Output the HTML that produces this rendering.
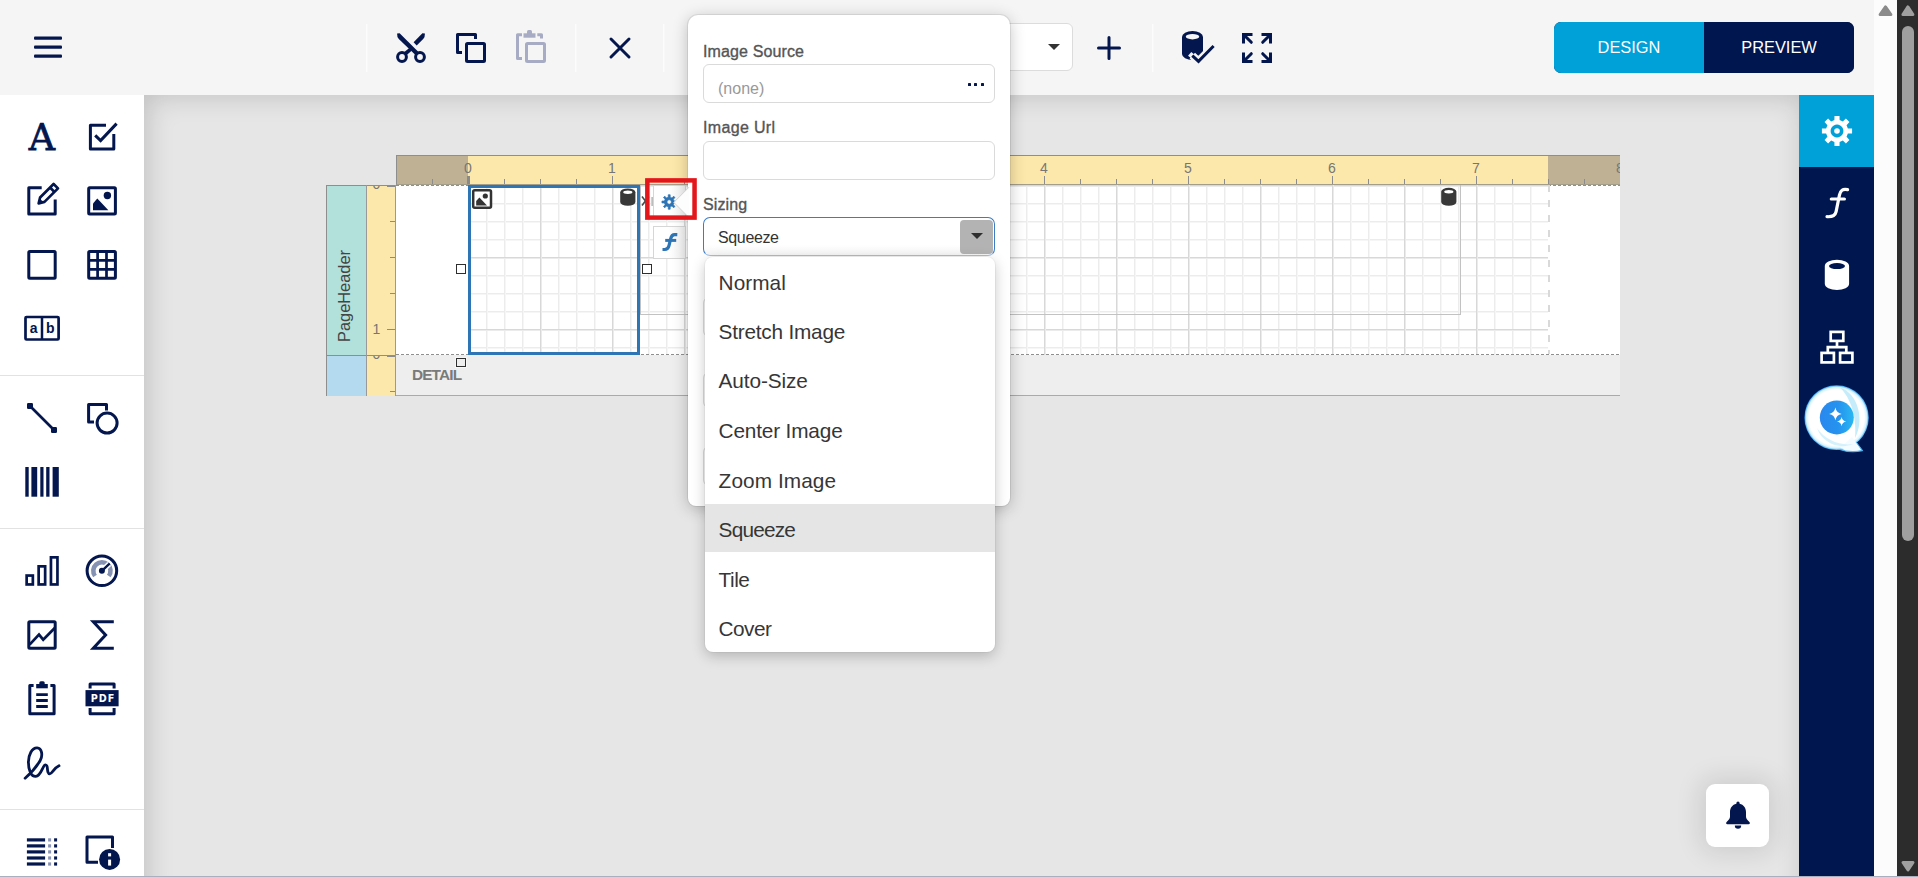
<!DOCTYPE html>
<html lang="en">
<head>
<meta charset="utf-8">
<title>Report Designer</title>
<style>
*{box-sizing:border-box;margin:0;padding:0}
html,body{width:1918px;height:877px;overflow:hidden;background:#e6e6e6;font-family:"Liberation Sans","DejaVu Sans",sans-serif;color:#333}
#app{position:absolute;left:0;top:0;width:1918px;height:877px;overflow:hidden}
#app div,#app span,#app i{position:absolute}
svg{position:absolute;left:0;top:0;overflow:visible}
/* top toolbar */
#topbar{left:0;top:0;width:1874px;height:95px;background:#f5f5f5}
.sep{top:24px;width:1px;height:48px;background:#fcfcfc;box-shadow:1px 0 0 rgba(255,255,255,.35)}
#ddbox{left:700px;top:23px;width:373px;height:48px;background:#fff;border:1px solid #dcdcdc;border-radius:6px}
#ddbox i{left:347px;top:20px;width:0;height:0;border-left:6px solid transparent;border-right:6px solid transparent;border-top:6px solid #333}
#btns{left:1554px;top:22px;width:300px;height:51px;border-radius:7px;overflow:hidden;background:#00164f}
#btns div{top:0;height:51px;width:150px;color:#fff;font-size:16.4px;line-height:50px;text-align:center}
#btns .d{left:0;background:#00a0d8}
#btns .p{left:150px;background:#00164f}
/* left toolbox */
#toolbox{left:0;top:95px;width:144px;height:782px;background:#fff}
.hr{left:0;width:144px;height:1px;background:#e2e2e2}
/* main */
#main{left:144px;top:95px;width:1655px;height:900px;background:#e6e6e6;box-shadow:inset 4px 2px 27px rgba(0,0,0,.16)}
/* right bar */
#rightbar{left:1799px;top:95px;width:75px;height:782px;background:#00164f}
#rightbar .active{left:0;top:0;width:75px;height:72px;background:#00a0d8}
/* scrollbars */
#sb1{left:1874px;top:0;width:23px;height:877px;background:#fcfcfc}
#sb2{left:1897px;top:0;width:21px;height:877px;background:#2c2c2c}
#sb2 .thumb{left:5px;top:26px;width:12px;height:515px;border-radius:6px;background:#9f9f9f}
#bottomline{left:0;top:876px;width:1918px;height:1px;background:#a9afbe}
/* design surface */
#hruler{left:396px;top:155px;width:1224px;height:30px;border-top:1px solid #8e8e8e;border-left:1px solid #8e8e8e;border-bottom:1px solid #a39d8c;
 background:linear-gradient(90deg,#bfb294 0,#bfb294 71px,#fde8ab 71px,#fde8ab 1151px,#bfb294 1151px);overflow:hidden}
#hruler .t1{left:-1px;top:23px;width:1224px;height:6px;background:repeating-linear-gradient(90deg,#8c8c8c 0,#8c8c8c 1px,transparent 1px,transparent 36px)}
#hruler .t2{left:71px;top:20px;width:1224px;height:9px;background:repeating-linear-gradient(90deg,#8c8c8c 0,#8c8c8c 1px,transparent 1px,transparent 144px)}
#hruler span{top:5px;width:40px;margin-left:-21px;text-align:center;font-size:14px;line-height:14px;color:#767676}
#seclab{left:326px;top:185px;width:40px;height:211px;border-left:1px solid #8e8e8e;border-top:1px solid #8e8e8e;background:#b2e0db;overflow:hidden}
#seclab .d{left:0;top:169px;width:40px;height:41px;background:#b3daee;border-top:1px solid #8e8e8e}
#seclab .t{left:-2px;top:156px;width:170px;height:40px;transform-origin:0 0;transform:rotate(-90deg);font-size:16.4px;line-height:38px;color:#444;padding-left:0;white-space:nowrap}
#vruler{left:366px;top:185px;width:30px;height:211px;background:#fde8ab;border-left:1px solid #999;border-right:1px solid #999;overflow:hidden}
#vruler .sec{left:0;width:28px;overflow:hidden;border-top:1px solid #8e8e8e}
#vruler b{position:absolute;right:0;height:1px;background:#8c8c8c;width:5px}
#vruler b.m{width:8px}
#vruler span{left:0;width:19px;text-align:center;font-size:14px;line-height:14px;color:#767676}
#page{left:396px;top:185px;width:1224px;height:170px;background:#fff}
#detail{left:396px;top:355px;width:1224px;height:41px;background:#eee;border-bottom:1px solid #aaa}
#detail span{left:16px;top:11px;font-size:15.4px;font-weight:bold;color:#7a7a7a;letter-spacing:-.88px;line-height:18px}
#grid{left:468px;top:185px;width:1080px;height:170px;
 background-image:linear-gradient(90deg,#d8d8d8 1px,#ebebeb 1px,#ebebeb 2px,transparent 2px),linear-gradient(#d8d8d8 1px,#ebebeb 1px,#ebebeb 2px,transparent 2px),linear-gradient(90deg,#ececec 1px,#f6f6f6 1px,#f6f6f6 2px,transparent 2px),linear-gradient(#ececec 1px,#f6f6f6 1px,#f6f6f6 2px,transparent 2px);
 background-size:72px 72px,72px 72px,18px 18px,18px 18px}
.dash-h{height:1px;background:repeating-linear-gradient(90deg,#8f8f8f 0,#8f8f8f 3px,transparent 3px,transparent 5px)}
.dash-v{width:2px;background:repeating-linear-gradient(#d9d9d9 0,#d9d9d9 7px,transparent 7px,transparent 15px)}
#tbx{left:640px;top:185px;width:821px;height:130px;border:1px solid #c2c2c2;border-top:none}
#sel{left:468px;top:185px;width:172px;height:170px;border:3px solid #2e75b6}
.hdl{width:10px;height:10px;background:#fff;border:1px solid #2e2e2e}
.sbtn{width:33px;height:32px;border:1px solid #d6d6d6;background:linear-gradient(90deg,#fff 45%,#f0f0f0)}
#redbox{left:645px;top:178px;width:52px;height:42px;border:4px solid #e3161b}
/* popup */
  #popup{left:688px;top:15px;width:322px;height:491px;background:#fff;border-radius:10px 10px 8px 8px;box-shadow:0 0 0 1px rgba(0,0,0,.07),0 3px 16px rgba(0,0,0,.24)}
  #parrow{left:679px;top:192.5px;width:18px;height:18px;background:#fff;transform:rotate(45deg);box-shadow:-1px 1px 0 0 #d8d8d8}
  #popup .lbl{left:15px;font-size:16px;line-height:20px;color:#555;white-space:nowrap;-webkit-text-stroke:.35px #555;letter-spacing:.12px}
  #popup .inp{left:15px;width:292px;height:39px;border:1px solid #dadada;border-radius:6px;background:#fff}
  #popup .inp span{left:14px;top:14px;font-size:16px;line-height:20px;color:#999;white-space:nowrap}
  #popup .dots i{top:18.4px;width:3px;height:3px;background:#03164e;border-radius:.6px}
  #combo{left:15px;top:202px;width:292px;height:39px;border:1px solid #3b7cc4;border-bottom-color:#9ec1e8;border-radius:7px;background:linear-gradient(#fff 72%,#f6f6f6)}
  #combo span{left:14px;top:10px;font-size:16px;line-height:20px;color:#333;white-space:nowrap;letter-spacing:-.36px}
  #combo .b{left:256px;top:2px;width:33px;height:34px;border-radius:4px;background:#b3b3b3}
  #combo .b i{left:10.5px;top:12.5px;width:0;height:0;border-left:6px solid transparent;border-right:6px solid transparent;border-top:6px solid #2e2e2e}
  #list{left:705px;top:257px;width:290px;height:394.5px;background:#fff;border-radius:8px;box-shadow:0 4px 14px rgba(0,0,0,.22),0 0 0 1px rgba(0,0,0,.04);overflow:hidden}
  #list div{left:0;width:290px;height:49.3px;line-height:51.6px;padding-left:13.6px;font-size:20.8px;color:#363636;white-space:nowrap}
  #list div.s{background:#e5e5e5}
</style>
</head>
<body>
<div id="app">
  <div id="main"></div>
  <div id="hruler"><div class="t1"></div><div class="t2"></div><div style="left:70px;top:20px;width:3px;height:9px;background:#8a8a8a"></div>
    <span style="left:72px">0</span><span style="left:216px">1</span><span style="left:360px">2</span><span style="left:504px">3</span><span style="left:648px">4</span><span style="left:792px">5</span><span style="left:936px">6</span><span style="left:1080px">7</span><span style="left:1224px">8</span>
  </div>
  <div id="seclab"><div class="t">PageHeader</div><div class="d"></div></div>
  <div id="vruler">
    <div class="sec" style="top:0;height:170px"><span style="top:-9px">0</span><span style="top:136px">1</span>
      <b class="m" style="top:0"></b><b style="top:35px"></b><b style="top:71px"></b><b style="top:107px"></b><b class="m" style="top:143px"></b></div>
    <div class="sec" style="top:170px;height:41px"><span style="top:-9px">0</span><b class="m" style="top:0"></b><b style="top:35px"></b></div>
  </div>
  <div id="page"></div>
  <div id="detail"><span>DETAIL</span></div>
  <div id="grid"></div>
  <div class="dash-h" style="left:396px;top:185px;width:72px"></div>
  <div class="dash-h" style="left:396px;top:354px;width:1224px"></div>
  <div class="dash-h" style="left:1548px;top:185px;width:72px"></div>
  <div class="dash-v" style="left:1548px;top:185px;height:169px"></div>
  <div id="tbx"></div>
  <div id="sel"></div>
  <div class="hdl" style="left:456px;top:264px"></div>
  <div class="hdl" style="left:642px;top:264px"></div>
  <div class="hdl" style="left:456px;top:358px;height:9px;background:#eee;box-shadow:0 0 0 1px rgba(255,255,255,.55)"></div>
  <div style="left:651px;top:196.5px;width:2px;height:9px;background:linear-gradient(90deg,#d9d9d9,#b4b4b4)"></div>
  <div class="sbtn" style="left:653px;top:185px"></div>
  <div class="sbtn" style="left:653px;top:226px;height:33px"></div>
  <svg width="1918" height="877" viewBox="0 0 1918 877">
    <path d="M642,196.6 L648.8,205.4 M648.8,196.6 L642,205.4" stroke="#4a4a4a" stroke-width="1.6" fill="none"/>
    <!-- image placeholder icon -->
    <rect x="473.2" y="190.2" width="17.8" height="17.6" rx="1.5" fill="#fff" stroke="#333" stroke-width="2.5"/>
    <circle cx="485.3" cy="196" r="2.6" fill="#333"/>
    <path d="M476.2,205.4 V201 L479.4,197.6 L487,205.4 Z" fill="#333"/>
    <!-- db icons -->
    <g fill="#383838">
      <path d="M620.2,192.2 a7.6,3.8 0 0 1 15.2,0 V202 a7.6,3.8 0 0 1 -15.2,0 Z"/>
      <path d="M1441.2,191.6 a7.6,3.8 0 0 1 15.2,0 V202 a7.6,3.8 0 0 1 -15.2,0 Z"/>
    </g>
    <ellipse cx="627.8" cy="192.3" rx="4.6" ry="1.7" fill="#fff"/>
    <ellipse cx="1448.8" cy="191.7" rx="4.6" ry="1.7" fill="#fff"/>
    <!-- gear + f on small buttons -->
    <path fill="#2e75b6" fill-rule="evenodd" stroke="#2e75b6" stroke-width=".7" stroke-linejoin="round" d="M668.24,197.19 L668.23,194.76 L670.17,194.76 L670.16,197.19 L671.92,197.93 L673.63,196.20 L675.00,197.57 L673.27,199.28 L674.01,201.04 L676.44,201.03 L676.44,202.97 L674.01,202.96 L673.27,204.72 L675.00,206.43 L673.63,207.80 L671.92,206.07 L670.16,206.81 L670.17,209.24 L668.23,209.24 L668.24,206.81 L666.48,206.07 L664.77,207.80 L663.40,206.43 L665.13,204.72 L664.39,202.96 L661.96,202.97 L661.96,201.03 L664.39,201.04 L665.13,199.28 L663.40,197.57 L664.77,196.20 L666.48,197.93 Z M669.2,199.8 a2.2,2.2 0 1 0 0.01,0 Z"/>
    <g fill="none" stroke="#2e75b6" stroke-width="3.2" stroke-linejoin="round">
      <path d="M677.3,234.7 L674.6,234.6 C671.9,234.6 671.3,236 670.7,238.6 L669,245.6 C668.3,248.6 667.2,249.5 664.8,249.5 L662.5,249.5"/>
      <path d="M665.2,240.4 H676.2" stroke-width="3"/>
    </g>
  </svg>
  <div id="topbar">
    <div class="sep" style="left:366px"></div>
    <div class="sep" style="left:575px"></div>
    <div class="sep" style="left:663px"></div>
    <div class="sep" style="left:1152px"></div>
    <div id="ddbox"><i></i></div>
    <div id="btns"><div class="d">DESIGN</div><div class="p">PREVIEW</div></div>
  </div>
  <div id="toolbox">
    <div class="hr" style="top:280px"></div>
    <div class="hr" style="top:433px"></div>
    <div class="hr" style="top:714px"></div>
  </div>
  <div id="rightbar"><div class="active"></div></div>
  <div id="bell" style="left:1706px;top:784px;width:63px;height:63px;border-radius:9px;background:#fff;box-shadow:0 0 26px 6px rgba(0,0,0,.11)"></div>
  <svg id="icons" width="1918" height="877" viewBox="0 0 1918 877" font-family="'Liberation Sans','DejaVu Sans',sans-serif">
   <g fill="#03164e" stroke="none">
    <!-- hamburger -->
    <rect x="34" y="36.5" width="28" height="3.2" rx="1"/><rect x="34" y="45.5" width="28" height="3.2" rx="1"/><rect x="34" y="54.5" width="28" height="3.2" rx="1"/>
    <!-- scissors -->
    <g transform="translate(396,33)">
      <path d="M1.1,0.5 L3.6,0.3 L23,19.6 L20,22.6 L2.8,6 Q0.9,4 1.1,0.5 Z"/>
      <path d="M28.9,0.5 L26.4,0.3 L17.6,9.2 L20.7,12.4 L27.2,6 Q29.1,4 28.9,0.5 Z"/>
      <path d="M13,15.2 L15.6,17.8 L10.2,22.6 L7.4,19.8 Z"/>
      <circle cx="6" cy="24" r="4.4" fill="none" stroke="#03164e" stroke-width="3"/>
      <circle cx="24" cy="24" r="4.4" fill="none" stroke="#03164e" stroke-width="3"/>
    </g>
   </g>
   <g fill="none" stroke="#03164e" stroke-width="3" stroke-linejoin="round">
    <!-- copy -->
    <rect x="466.5" y="43.5" width="18" height="18" rx="1"/>
    <path d="M475.5,39 V34.5 H457.5 V52.5 H462"/>
    <!-- X -->
    <path d="M611,39 L629,57 M629,39 L611,57" stroke-linecap="round"/>
    <!-- plus -->
    <path d="M1098.5,48 H1119.5 M1109,37.5 V58.5" stroke-linecap="round"/>
   </g>
   <!-- paste (disabled) -->
   <g fill="none" stroke="#a7acc4" stroke-width="3" stroke-linejoin="round">
    <rect x="526.5" y="43.5" width="18" height="18" rx="1"/>
    <path d="M522,34.8 H517.5 V58.4 H522"/>
    <path d="M537.3,34.8 H541.5 V38.6"/>
   </g>
   <g fill="#a7acc4"><rect x="523.5" y="33.3" width="12" height="4.4"/><rect x="527" y="30" width="5" height="5" rx="1.5"/></g>
   <!-- db check -->
   <path fill="#03164e" d="M1182,37 a10.5,6 0 0 1 21,0 V54 a10.5,6 0 0 1 -21,0 Z"/>
   <ellipse cx="1192.5" cy="36.7" rx="6.7" ry="2.7" fill="#f5f5f5"/>
   <path d="M1192.3,55.6 L1198.5,61.4 L1213.6,46" fill="none" stroke="#f5f5f5" stroke-width="8"/>
   <path d="M1189.6,57 L1192.8,53.2" fill="none" stroke="#f5f5f5" stroke-width="4"/>
   <path d="M1192.3,55.6 L1198.5,61.4 L1213.6,46" fill="none" stroke="#03164e" stroke-width="3"/>
   <!-- expand -->
   <g fill="none" stroke="#03164e" stroke-width="3" transform="translate(1242,33)">
     <path d="M1.5,10.5 V1.5 H10.5 M19.5,1.5 H28.5 V10.5 M28.5,19.5 V28.5 H19.5 M10.5,28.5 H1.5 V19.5"/>
     <path d="M2.5,2.5 L9.3,9.3 M27.5,2.5 L20.7,9.3 M27.5,27.5 L20.7,20.7 M2.5,27.5 L9.3,20.7" stroke-linecap="round"/>
   </g>

   <!-- ============ left toolbox ============ -->
   <text x="42" y="150" font-family="'DejaVu Serif','Liberation Serif',serif" font-size="36.4" text-anchor="middle" fill="#03164e" stroke="#03164e" stroke-width=".75" stroke-linejoin="miter">A</text>
   <g fill="none" stroke="#03164e" stroke-width="3" stroke-linejoin="round">
    <!-- checkbox -->
    <path d="M106,125.2 H90.4 V148.9 H113.8 V134"/>
    <path d="M95.2,135.4 L100.6,140.6 L116.6,123.6" stroke-linejoin="miter"/>
    <!-- edit -->
    <path d="M41.7,187.7 H28.8 V214.1 H55.2 V199.6"/>
    <g transform="translate(38.4,203.6) rotate(-45)" stroke-width="2.7">
      <path d="M0.4,0 L5.5,-3.1 H24.6 V3.1 H5.5 Z" fill="#fff"/>
      <path d="M19.6,-3.1 V3.1"/>
      <path d="M0.4,0 L4.6,-2.4 V2.4 Z" fill="#03164e" stroke="none"/>
    </g>
    <!-- image -->
    <rect x="88.7" y="187.7" width="26.7" height="26.4" rx="1"/>
    <!-- square -->
    <rect x="28.8" y="251.5" width="26.4" height="26.7" rx="1"/>
    <!-- grid -->
    <rect x="88.7" y="251.5" width="26.7" height="26.7" rx="1"/>
    <path d="M97.6,251.5 V278.2 M106.5,251.5 V278.2 M88.7,260.4 H115.4 M88.7,269.3 H115.4" stroke-width="2.7"/>
    <!-- ab -->
    <rect x="25.5" y="317" width="33.1" height="22.5" rx="1" stroke-width="2.7"/>
    <path d="M42,317 V339.5" stroke-width="2.5"/>
    <!-- line -->
    <path d="M30,406 L54,430" stroke-width="2.7"/>
    <!-- shape -->
    <path d="M106.5,410.5 V404.5 H88.6 V422 H94"/>
    <circle cx="107.1" cy="423.1" r="10"/>
    <!-- bar chart -->
    <g stroke-width="2.7" stroke-linejoin="miter"><rect x="26.65" y="575.55" width="6.2" height="8.9"/><rect x="38.65" y="566.35" width="6.5" height="18.1"/><rect x="50.95" y="557.35" width="6.5" height="27.1"/></g>
    <!-- gauge -->
    <circle cx="101.9" cy="570.8" r="14.8"/>
    <path d="M95,576 A8.6,8.6 0 1 1 108.8,576" stroke="#8692b3" stroke-width="4.6"/>
    <path d="M101.9,570.8 L109.2,564" stroke="#fff" stroke-width="5.5"/>
    <path d="M101.9,570.8 L109,564.2" stroke-width="2.4" stroke-linecap="round"/>
    <!-- line chart -->
    <rect x="28.8" y="621.8" width="26.4" height="26.4" rx="1"/>
    <path d="M29.6,644.6 L39,634.6 L43.2,639.7 L55,627.8" stroke-width="2.7" stroke-linejoin="miter"/>
    <!-- sigma -->
    <path d="M113.8,621.8 H93.3 L105.6,635 L93.3,648.2 H113.8" stroke-linejoin="miter"/>
    <!-- clipboard -->
    <path d="M33.6,685.6 H29.8 V713.7 H54.1 V685.6 H50.4"/>
    <path d="M36.2,694.6 H47.8 M36.2,700.5 H47.8 M36.2,706.5 H47.8" stroke-width="2.9"/>
    <!-- pdf frame -->
    <path d="M90.1,688.5 V684.1 H114.1 V688.5 M90.1,708 V713.7 H114.1 V708" stroke-linecap="butt"/>
    <!-- signature -->
    <path d="M25.1,778.2 C30,774 37,766 40.2,760.5 C43,755.5 42,748 37.1,747.8 C32,747.6 28.4,755 28.4,762 C28.4,770 31,776.6 35.8,776.4 C40,776.2 41.6,770 43.6,766.6 C45,764.2 47,764.4 47.3,767.6 C47.6,771 47.8,773.8 49.8,773.8 C52,773.8 54,768 59,765.8" stroke-width="2.8" stroke-linecap="round"/>
    <!-- report info -->
    <path d="M112.5,848 V836.9 H87 V862.3 H98"/>
   </g>
   <g fill="#03164e">
    <circle cx="107.4" cy="195.5" r="3.7"/>
    <path d="M93,210.2 V203.4 L97.3,198.4 L108.4,210.2 Z"/>
    <text x="33.6" y="333.2" font-size="14" font-weight="bold" text-anchor="middle">a</text>
    <text x="50.4" y="333.2" font-size="14" font-weight="bold" text-anchor="middle">b</text>
    <rect x="27" y="403" width="6" height="6" rx="1.2"/><rect x="51" y="427" width="6" height="6" rx="1.2"/>
    <rect x="25.3" y="467" width="3.4" height="29.7"/><rect x="31.4" y="467" width="5.8" height="29.7"/><rect x="40.3" y="467" width="3.2" height="29.7"/><rect x="46.2" y="467" width="3.3" height="29.7"/><rect x="52.6" y="467" width="6.2" height="29.7"/>
    <circle cx="101.9" cy="570.8" r="3"/>
    <rect x="36.2" y="684" width="11.6" height="4.3"/><rect x="39.3" y="681.2" width="5.4" height="5" rx="1.6"/>
    <rect x="85.5" y="690.1" width="33.1" height="16.2"/>
    <text x="103" y="701.9" font-family="'DejaVu Sans','Liberation Sans',sans-serif" font-size="9.6" font-weight="bold" letter-spacing=".95" text-anchor="middle" fill="#fff">PDF</text>
    <g><rect x="26.9" y="838.3" width="18.2" height="3.2"/><rect x="26.9" y="844.3" width="18.2" height="3.2"/><rect x="26.9" y="850.3" width="18.2" height="3.2"/><rect x="26.9" y="856.4" width="18.2" height="3.2"/><rect x="26.9" y="862.4" width="18.2" height="3.2"/></g>
    <g><rect x="54.1" y="838.3" width="3" height="3.2"/><rect x="54.1" y="844.3" width="3" height="3.2"/><rect x="54.1" y="850.3" width="3" height="3.2"/><rect x="54.1" y="856.4" width="3" height="3.2"/><rect x="54.1" y="862.4" width="3" height="3.2"/></g>
    <g fill="#8a94b4"><rect x="48.1" y="838.3" width="3" height="3.2"/><rect x="48.1" y="844.3" width="3" height="3.2"/><rect x="48.1" y="850.3" width="3" height="3.2"/><rect x="48.1" y="856.4" width="3" height="3.2"/><rect x="48.1" y="862.4" width="3" height="3.2"/></g>
    <circle cx="109.6" cy="859.4" r="10.5"/>
    <rect x="108.1" y="853.2" width="3" height="3.2" fill="#fff"/><rect x="108.1" y="859.6" width="3" height="6" fill="#fff"/>
    <!-- bell -->
    <path d="M1738,801.4 a1.6,1.6 0 0 1 1.6,1.6 v0.7 c4,0.8 6.4,4.2 6.4,8.3 v4.5 c0,2 1.2,3.4 3.4,5.6 c0.9,0.9 0.5,2.1 -0.8,2.1 h-21.2 c-1.3,0 -1.7,-1.2 -0.8,-2.1 c2.2,-2.2 3.4,-3.6 3.4,-5.6 v-4.5 c0,-4.1 2.4,-7.5 6.4,-8.3 v-0.7 a1.6,1.6 0 0 1 1.6,-1.6 z"/>
    <path d="M1734.8,825.6 h6.4 a3.2,3.2 0 0 1 -6.4,0 z"/>
   </g>

   <!-- ============ right bar ============ -->
   <g fill="#fff">
    <path fill-rule="evenodd" d="M1834.39,120.11 L1834.49,115.91 L1839.51,115.91 L1839.61,120.11 L1842.85,121.45 L1845.90,118.55 L1849.45,122.10 L1846.55,125.15 L1847.89,128.39 L1852.09,128.49 L1852.09,133.51 L1847.89,133.61 L1846.55,136.85 L1849.45,139.90 L1845.90,143.45 L1842.85,140.55 L1839.61,141.89 L1839.51,146.09 L1834.49,146.09 L1834.39,141.89 L1831.15,140.55 L1828.10,143.45 L1824.55,139.90 L1827.45,136.85 L1826.11,133.61 L1821.91,133.51 L1821.91,128.49 L1826.11,128.39 L1827.45,125.15 L1824.55,122.10 L1828.10,118.55 L1831.15,121.45 Z M1837,124.6 a6.4,6.4 0 1 0 0.01,0 Z"/>
    <circle cx="1837" cy="131" r="2.8"/>
    <path d="M1824.8,266 a12.15,6.2 0 0 1 24.3,0 V283.8 a12.15,6.2 0 0 1 -24.3,0 Z"/>
    <ellipse cx="1837" cy="266.1" rx="8" ry="3" fill="#00164f"/>
   </g>
   <g fill="none" stroke="#fff" stroke-width="3.2" stroke-linecap="round">
    <path d="M1847.6,189.6 C1842.6,188.4 1840.4,190.6 1839.5,194.8 L1836.1,211.6 C1835.2,215.8 1832.4,217 1827,216.7"/>
    <path d="M1831.3,199 H1844.4"/>
   </g>
   <g fill="none" stroke="#fff" stroke-width="2.7">
    <rect x="1830.7" y="331.9" width="12.6" height="9"/>
    <rect x="1821.6" y="352.9" width="12.3" height="9.5"/>
    <rect x="1840.1" y="352.9" width="12.3" height="9.5"/>
    <path d="M1837,341 V347.2 M1827.8,352.9 V347.2 H1846.3 V352.9"/>
   </g>
   <!-- AI assistant -->
   <defs>
    <radialGradient id="bub" cx="50%" cy="50%" r="50%"><stop offset="0.86" stop-color="#fff"/><stop offset="0.94" stop-color="#d4f2fd"/><stop offset="1" stop-color="#2f9ff0"/></radialGradient>
    <linearGradient id="core" x1="0" y1="0" x2="1" y2="0"><stop offset="0" stop-color="#2a88ee"/><stop offset="0.55" stop-color="#2593ef"/><stop offset="1" stop-color="#29b8f2"/></linearGradient>
   </defs>
   <path d="M1853,438 L1862.4,450.6 Q1850,453.4 1838,449 Z" fill="#f4fcff" stroke="#4ab4f5" stroke-width="1.2" stroke-linejoin="round"/>
   <ellipse cx="1836.6" cy="417.7" rx="32.2" ry="32.4" fill="url(#bub)"/>
   <path d="M1852,437 L1860.6,449.4 Q1850,451.6 1840,448 Z" fill="#f4fcff"/>
   <path d="M1840,387.4 C1858,393 1865,420 1855,438 C1857,418 1851,398 1840,387.4 Z" fill="#bfeafa" opacity=".9"/>
   <path d="M1817,428 C1822,443 1840,450 1853,444 C1840,446 1825,440 1817,428 Z" fill="#cdeffb" opacity=".85"/>
   <circle cx="1836.8" cy="417.4" r="17" fill="url(#core)"/>
   <path d="M1835.4,407.6 Q1836.3,413 1841.6,413.9 Q1836.3,414.8 1835.4,420.2 Q1834.5,414.8 1829.2,413.9 Q1834.5,413 1835.4,407.6 Z M1841.6,417 Q1842.3,420.9 1846.2,421.6 Q1842.3,422.3 1841.6,426.2 Q1840.9,422.3 1837,421.6 Q1840.9,420.9 1841.6,417 Z" fill="#fff"/>
  </svg>
  <div id="popup">
    <div class="lbl" style="top:27.2px">Image Source</div>
    <div class="inp" style="top:49px"><span>(none)</span><div class="dots"><i style="left:264.3px"></i><i style="left:270.4px"></i><i style="left:276.5px"></i></div></div>
    <div class="lbl" style="top:103.4px;letter-spacing:.33px">Image Url</div>
    <div class="inp" style="top:126px"></div>
    <div class="lbl" style="top:180.4px">Sizing</div>
    <div class="inp" style="top:282px;height:40px"></div>
    <div class="inp" style="top:357px;height:36px"></div>
    <div class="inp" style="top:431px;height:40px"></div>
    <div id="combo"><span>Squeeze</span><div class="b"><i></i></div></div>
  </div>
  <svg width="1918" height="877" viewBox="0 0 1918 877"><path d="M689,187.2 L673.8,202.4 L689,217.6" fill="#fdfdfd" stroke="#d2d2d2" stroke-width="1"/></svg>
  <div id="list">
    <div class="s" style="top:246.6px;height:48.8px"></div>
    <div style="top:-0.46px;letter-spacing:.03px">Normal</div>
    <div style="top:48.97px;letter-spacing:-.23px">Stretch Image</div>
    <div style="top:98.40px;letter-spacing:-.12px">Auto-Size</div>
    <div style="top:147.83px;letter-spacing:-.17px">Center Image</div>
    <div style="top:197.80px;letter-spacing:.08px">Zoom Image</div>
    <div style="top:247.10px;letter-spacing:-.81px">Squeeze</div>
    <div style="top:296.90px;letter-spacing:-.48px">Tile</div>
    <div style="top:345.55px;letter-spacing:-.56px">Cover</div>
  </div>
  <svg width="1918" height="877" viewBox="0 0 1918 877"><rect x="647.35" y="180.4" width="47.2" height="37.2" fill="none" stroke="#e3161b" stroke-width="4.5"/></svg>
  <div id="sb1"></div>
  <div id="sb2"><div class="thumb"></div></div>
  <svg width="1918" height="877" viewBox="0 0 1918 877">
    <path d="M1885.5,6.9 L1890.9,14.5 H1880.1 Z" fill="#8b8b8b" stroke="#8b8b8b" stroke-width="3" stroke-linejoin="round"/>
    <path d="M1907.9,6.9 L1912.9,14.5 H1902.9 Z" fill="#9f9f9f" stroke="#9f9f9f" stroke-width="3" stroke-linejoin="round"/>
    <path d="M1908,869.9 L1913,862.5 H1903 Z" fill="#9f9f9f" stroke="#9f9f9f" stroke-width="3" stroke-linejoin="round"/>
  </svg>
  <div id="bottomline"></div>
</div>
</body>
</html>
